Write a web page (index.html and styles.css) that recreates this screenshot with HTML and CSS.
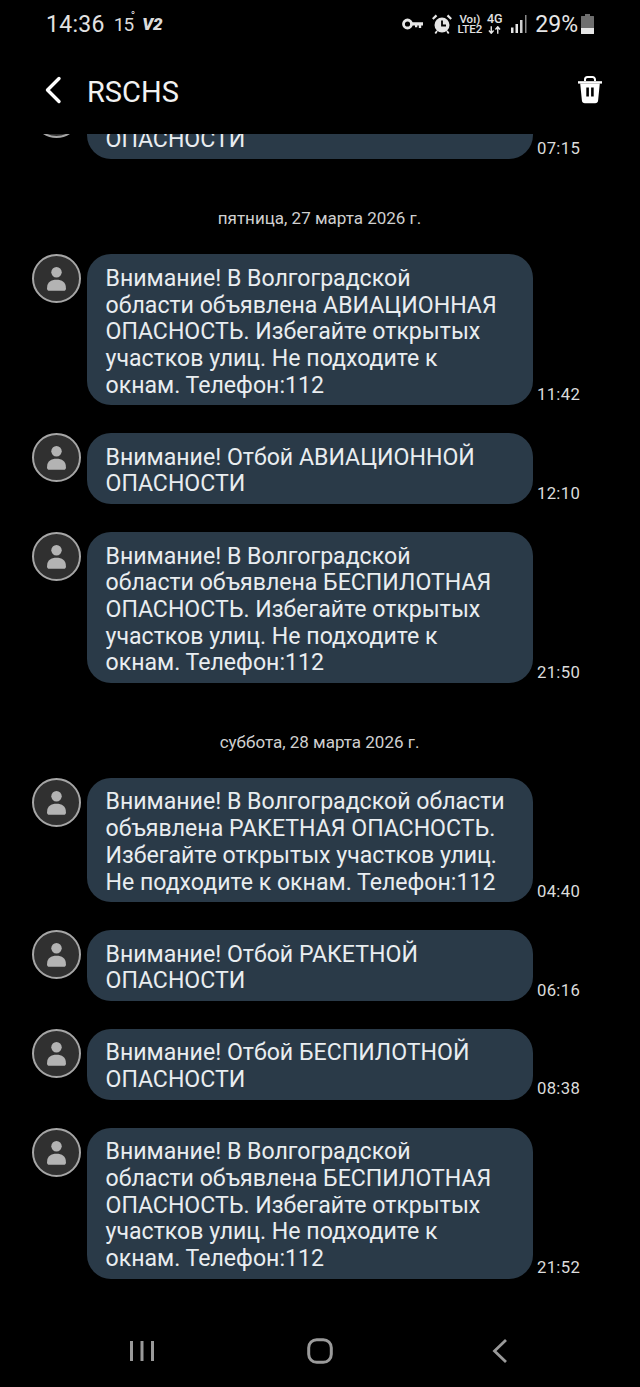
FILE: index.html
```html
<!DOCTYPE html>
<html lang="ru">
<head>
<meta charset="utf-8">
<title>RSCHS</title>
<link rel="stylesheet" href="styles.css">
</head>
<body>
<svg class="defs" aria-hidden="true"><symbol id="person" viewBox="0 0 50 50"><circle cx="25" cy="18" r="5.800" fill="#b3b3b3"/><path d="M14.500 36c0-7 4.500-9.500 10.500-9.500s10.500 2.500 10.500 9.500c0 2-1 2.500-2.500 2.500H17c-1.500 0-2.500-.5-2.500-2.500z" fill="#b3b3b3"/></symbol></svg>
<div class="phone">
  <div class="status">
    <div class="status-left">
      <span class="clock">14:36</span>
      <span class="temp">15<sup class="deg">°</sup></span>
      <span class="v2">V2</span>
    </div>
    <div class="status-right">
      <svg class="ic-key" viewBox="0 0 21 12"><circle cx="5.500" cy="6" r="4" fill="none" stroke="#e6e6e6" stroke-width="2.800"/><path d="M9.500 4.200H21v3.400h-1.800v2.500h-2.400V7.600h-1.500v1.700h-2.300V7.600H9.500z" fill="#e6e6e6"/></svg>
      <svg class="ic-alarm" viewBox="0 0 20 20"><circle cx="10" cy="11" r="7.500" fill="#e6e6e6"/><path d="M10 6.500V11.500H14" fill="none" stroke="#000" stroke-width="1.800"/><path d="M.8 5 4.500 1.400M19.200 5 15.500 1.400" stroke="#e6e6e6" stroke-width="2.200" fill="none"/><path d="M5 17 3.300 19.500M15 17 16.700 19.500" stroke="#e6e6e6" stroke-width="1.800" fill="none"/></svg>
      <div class="volte"><span>Voı)</span><span>LTE2</span></div>
      <div class="net"><span>4G</span><svg class="ic-arrows" viewBox="0 0 14 8"><path d="M3.500 0v7M1 4.500l2.500 3 2.500-3M10.500 8V1M8 3.500l2.500-3 2.500 3" stroke="#e6e6e6" stroke-width="1.500" fill="none"/></svg></div>
      <svg class="ic-signal" viewBox="0 0 17 18"><path d="M1 12.500h2.500V18H1zM5.500 9h2.500v9H5.500z" fill="#e6e6e6"/><path d="M10 5h2.500v13H10z" fill="#d0d0d0"/><path d="M15 0h1.500v18H15z" fill="#8a8a8a"/></svg>
      <span class="batt-text">29%</span>
      <svg class="ic-batt" viewBox="0 0 13 20"><path d="M4 0h5v2h3.500a.5.500 0 0 1 .5.500V14H0V2.500A.5.500 0 0 1 .5 2H4z" fill="#6e6e6e"/><path d="M0 14h13v5.500a.5.500 0 0 1-.5.500H.5a.5.500 0 0 1-.5-.5z" fill="#e6e6e6"/></svg>
    </div>
  </div>

  <header class="appbar">
    <svg class="ic-back" viewBox="0 0 18 28"><path d="M15 2.500 3.500 14 15 25.500" fill="none" stroke="#fff" stroke-width="3.400" stroke-linecap="round" stroke-linejoin="round"/></svg>
    <h1 class="title">RSCHS</h1>
    <svg class="ic-trash" viewBox="0 0 26 28"><path d="M8 5V3.500A2.500 2.500 0 0 1 10.500 1h5A2.500 2.500 0 0 1 18 3.500V5" fill="none" stroke="#fff" stroke-width="2"/><path d="M1 5.200h24v2.400H1z" fill="#fff"/><path fill-rule="evenodd" d="M3.200 7.500h19.600l-1.700 17a3 3 0 0 1-3 2.700H7.900a3 3 0 0 1-3-2.700zM9.300 11.500v9h2.600v-9zM14.100 11.500v9h2.600v-9z" fill="#fff"/></svg>
  </header>

  <main class="thread">
    <div class="thread-inner">
      <div class="msg">
        <div class="avatar"><svg><use href="#person"/></svg></div>
        <div class="bubble">Внимание! Отбой АВИАЦИОННОЙ<br>ОПАСНОСТИ</div>
        <time class="stamp">07:15</time>
      </div>

      <div class="date">пятница, 27 марта 2026 г.</div>

      <div class="msg">
        <div class="avatar"><svg><use href="#person"/></svg></div>
        <div class="bubble">Внимание! В Волгоградской<br>области объявлена АВИАЦИОННАЯ<br>ОПАСНОСТЬ. Избегайте открытых<br>участков улиц. Не подходите к<br>окнам. Телефон:112</div>
        <time class="stamp">11:42</time>
      </div>
      <div class="msg">
        <div class="avatar"><svg><use href="#person"/></svg></div>
        <div class="bubble">Внимание! Отбой АВИАЦИОННОЙ<br>ОПАСНОСТИ</div>
        <time class="stamp">12:10</time>
      </div>
      <div class="msg">
        <div class="avatar"><svg><use href="#person"/></svg></div>
        <div class="bubble">Внимание! В Волгоградской<br>области объявлена БЕСПИЛОТНАЯ<br>ОПАСНОСТЬ. Избегайте открытых<br>участков улиц. Не подходите к<br>окнам. Телефон:112</div>
        <time class="stamp">21:50</time>
      </div>

      <div class="date">суббота, 28 марта 2026 г.</div>

      <div class="msg">
        <div class="avatar"><svg><use href="#person"/></svg></div>
        <div class="bubble">Внимание! В Волгоградской области<br>объявлена РАКЕТНАЯ ОПАСНОСТЬ.<br>Избегайте открытых участков улиц.<br>Не подходите к окнам. Телефон:112</div>
        <time class="stamp">04:40</time>
      </div>
      <div class="msg">
        <div class="avatar"><svg><use href="#person"/></svg></div>
        <div class="bubble">Внимание! Отбой РАКЕТНОЙ<br>ОПАСНОСТИ</div>
        <time class="stamp">06:16</time>
      </div>
      <div class="msg">
        <div class="avatar"><svg><use href="#person"/></svg></div>
        <div class="bubble">Внимание! Отбой БЕСПИЛОТНОЙ<br>ОПАСНОСТИ</div>
        <time class="stamp">08:38</time>
      </div>
      <div class="msg">
        <div class="avatar"><svg><use href="#person"/></svg></div>
        <div class="bubble">Внимание! В Волгоградской<br>области объявлена БЕСПИЛОТНАЯ<br>ОПАСНОСТЬ. Избегайте открытых<br>участков улиц. Не подходите к<br>окнам. Телефон:112</div>
        <time class="stamp">21:52</time>
      </div>
    </div>
  </main>

  <nav class="navbar">
    <svg class="ic-recents" viewBox="0 0 24 22"><path d="M1.500 1v20M12 1v20M22.500 1v20" stroke="#9a9a9a" stroke-width="3" fill="none"/></svg>
    <svg class="ic-home" viewBox="0 0 26 26"><rect x="1.700" y="1.700" width="22.600" height="22.600" rx="8" fill="none" stroke="#9a9a9a" stroke-width="3"/></svg>
    <svg class="ic-nav-back" viewBox="0 0 16 26"><path d="M14 2 2.500 13 14 24" fill="none" stroke="#9a9a9a" stroke-width="2.800"/></svg>
  </nav>
</div>
</body>
</html>
```
FILE: styles.css
```css
* { box-sizing: border-box; }
html, body { margin: 0; padding: 0; background: #000; }
body { font-family: Roboto, "Liberation Sans", sans-serif; color: #e8e8e8; }
.defs { display: none; }

.phone {
  width: 640px;
  height: 1387px;
  display: flex;
  flex-direction: column;
  overflow: hidden;
  background: #000;
}

/* status bar */
.status {
  height: 48px;
  flex: none;
  display: flex;
  justify-content: space-between;
  align-items: center;
  padding: 0 46px 0 46px;
}
.status-left { display: flex; align-items: center; gap: 9px; }
.clock { font-size: 23px; color: #e2e2e2; letter-spacing: .3px; }
.temp { font-size: 19px; color: #dcdcdc; position: relative; padding-right: 4px; letter-spacing: -1px; }
.deg { position: absolute; top: -5px; left: 17px; font-size: 12px; line-height: 16px; }
.v2 { font-size: 17px; font-weight: 900; font-style: italic; color: #dcdcdc; margin-left: -4px; }
.status-right { display: flex; align-items: center; }
.ic-key { width: 21px; height: 12px; margin-right: 9px; }
.ic-alarm { width: 20px; height: 20px; margin-right: 6px; margin-top: -1px; }
.volte, .net {
  display: flex;
  flex-direction: column;
  align-items: center;
  font-size: 11.500px;
  font-weight: 500;
  line-height: 10.500px;
  color: #e2e2e2;
}
.volte { margin-right: 7px; width: 23px; }
.net { width: 13px; margin-right: 9px; font-size: 12.500px; }
.ic-arrows { width: 13px; height: 8px; margin-top: 2px; }
.ic-signal { width: 17px; height: 18px; margin-right: 8px; }
.batt-text { font-size: 23px; color: #e6e6e6; margin-right: 3px; }
.ic-batt { width: 13px; height: 20px; }

/* app bar */
.appbar {
  height: 86px;
  flex: none;
  display: flex;
  align-items: center;
  padding: 0 37px 2px 44px;
  background: #000;
}
.ic-back { width: 18px; height: 28px; }
.title {
  margin: 3px 0 0 25px;
  flex: 1;
  font-size: 29px;
  font-weight: 400;
  color: #f2f2f2;
}
.ic-trash { width: 26px; height: 28px; }

/* thread */
.thread { flex: 1; overflow: hidden; min-height: 0; }
.thread-inner { margin-top: -45.500px; padding-left: 32px; display: flex; flex-direction: column; }
.msg { display: flex; align-items: flex-start; margin-bottom: 27.900px; }
.avatar { width: 49px; height: 49px; flex: none; border-radius: 50%; background: #303030; border: 2px solid #a6a6a6; overflow: hidden; }
.avatar svg { display: block; width: 45px; height: 45px; }
.bubble {
  width: 446px;
  margin-left: 6px;
  padding: 11.500px 18.500px 6px 18.500px;
  flex: none;
  border-radius: 24px;
  background: #2a3a48;
  color: #e9edf0;
  font-size: 23.120px;
  line-height: 26.700px;
  white-space: nowrap;
}
.stamp {
  align-self: flex-end;
  margin-left: 4px;
  margin-bottom: 1.500px;
  font-size: 16.700px;
  line-height: 19px;
  color: #dcdcdc;
  letter-spacing: .3px;
}
.date {
  text-align: center;
  font-size: 17px;
  line-height: 18px;
  color: #d0d0d0;
  width: 575px;
  margin: 22px 0 27px;
}

/* nav */
.navbar {
  height: 72px;
  flex: none;
  background: #000;
  display: flex;
  align-items: center;
  padding: 0 0 0 130px;
}
.ic-recents { width: 24px; height: 22px; }
.ic-home { width: 26px; height: 26px; margin-left: 153px; }
.ic-nav-back { width: 16px; height: 26px; margin-left: 159px; }
```
